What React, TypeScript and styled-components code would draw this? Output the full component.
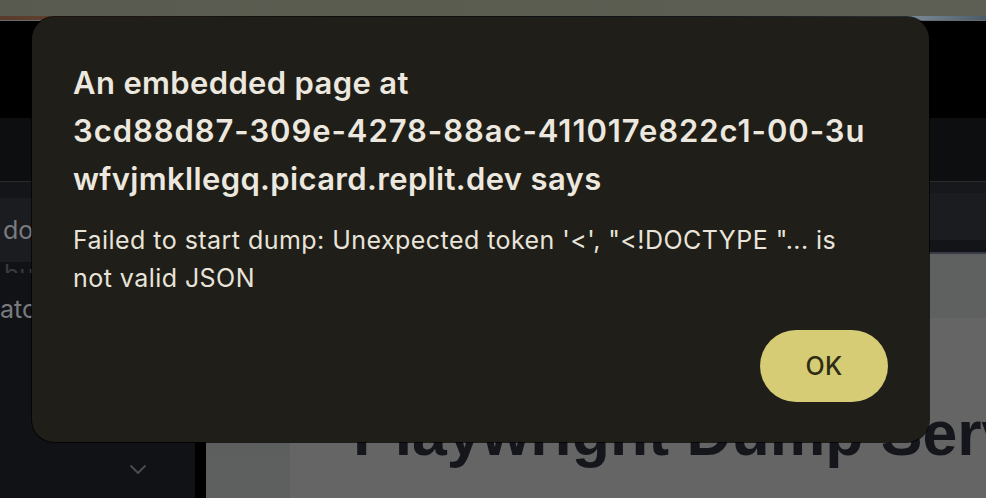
import React from "react";
import styled, { createGlobalStyle } from "styled-components";

const Global = createGlobalStyle`
  html, body { margin: 0; padding: 0; background: #000; }
  body { font-family: Inter, "Noto Sans", sans-serif; }
  * { box-sizing: border-box; }
`;

const Screen = styled.div`
  position: relative;
  width: 986px;
  height: 498px;
  overflow: hidden;
  display: flex;
  flex-direction: column;
  background: #000;
`;

const DesktopStrip = styled.div`
  height: 16px;
  flex: none;
  background: linear-gradient(90deg, #585a4f 0%, #5b5d51 50%, #5d5f55 100%);
`;

const WallpaperLine = styled.div`
  height: 5px;
  flex: none;
  background: linear-gradient(90deg, #5a3a2a 0%, #6a4a36 15%, #2a2d2c 35%, #3a4a55 70%, #8a9aa8 90%, #4a5a66 100%);
  border-bottom: 1px solid #6a6b6e;
`;

const BlackBar = styled.div`
  height: 97px;
  flex: none;
  background: #000;
`;

const AppNav = styled.div`
  height: 64px;
  flex: none;
  background: #0d0e10;
  border-bottom: 1px solid #2a2b2e;
`;

const Body = styled.div`
  flex: 1;
  display: flex;
  min-height: 0;
`;

const Sidebar = styled.div`
  width: 195px;
  flex: none;
  display: flex;
  flex-direction: column;
  background: #111215;
`;

const SidebarTop = styled.div`
  height: 16px;
  flex: none;
  background: #141518;
`;

const SideItem = styled.div<{ $active?: boolean; $faded?: boolean; $h: number; $pad: number }>`
  height: ${(p) => p.$h}px;
  flex: none;
  padding-left: ${(p) => p.$pad}px;
  display: flex;
  align-items: ${(p) => (p.$faded ? "flex-start" : "center")};
  line-height: ${(p) => (p.$faded ? 1 : "normal")};
  overflow: hidden;
  white-space: nowrap;
  background: ${(p) => (p.$active ? "#1b1c1f" : "transparent")};
  color: ${(p) => (p.$faded ? "#3a3b40" : "#7a7b80")};
  font-family: Inter, sans-serif;
  font-size: 25px;
`;

const SideSpacer = styled.div`
  flex: 1;
`;

const ChevronRow = styled.div`
  height: 38px;
  flex: none;
  display: flex;
  justify-content: center;
  align-items: flex-start;
  padding-left: 80px;
  padding-top: 4px;
  color: #4b4c51;
`;

const Gutter = styled.div`
  width: 11px;
  flex: none;
  background: #000;
`;

const Main = styled.div`
  flex: 1;
  display: flex;
  flex-direction: column;
  min-width: 0;
`;

const ToolbarTop = styled.div`
  height: 11px;
  flex: none;
  background: #17181b;
`;

const Toolbar = styled.div`
  height: 47px;
  flex: none;
  background: #1b1c1f;
`;

const ToolbarBottom = styled.div`
  height: 14px;
  flex: none;
  background: #131417;
  border-bottom: 2px solid #383a45;
`;

const Content = styled.div`
  flex: 1;
  display: flex;
  min-height: 0;
`;

const ContentSide = styled.div`
  width: 84px;
  flex: none;
  background: linear-gradient(180deg, #5a5b5b, #5e5f5f);
`;

const ContentMain = styled.div`
  flex: 1;
  display: flex;
  flex-direction: column;
  background: #656565;
  min-width: 0;
  overflow: hidden;
`;

const ContentHeader = styled.div`
  height: 64px;
  flex: none;
  background: #5f6060;
`;

const Heading = styled.h1`
  margin: 85px 0 0 0;
  padding: 0 0 0 63px;
  white-space: nowrap;
  font-family: "Liberation Sans", Arial, sans-serif;
  font-weight: 700;
  font-size: 62.5px;
  line-height: 60px;
  color: #15161b;
`;

const Dialog = styled.div`
  position: absolute;
  left: 32px;
  top: 17px;
  width: 897px;
  height: 425px;
  padding: 42px 41px 40px 41px;
  border-radius: 22px;
  background: #1f1e18;
  box-shadow: 0 0 0 1px rgba(0, 0, 0, 0.7);
  display: flex;
  flex-direction: column;
`;

const Title = styled.div`
  font-family: Inter, "Noto Sans", sans-serif;
  font-weight: 600;
  font-size: 31px;
  letter-spacing: 0.35px;
  line-height: 48px;
  color: #ece8df;
  white-space: nowrap;
`;

const HostPart = styled.span`
  letter-spacing: 0.93px;
`;

const Message = styled.div`
  margin-top: 18px;
  font-family: Inter, "Noto Sans", sans-serif;
  font-weight: 400;
  font-size: 25px;
  letter-spacing: 0.45px;
  line-height: 38px;
  color: #e8e4da;
  white-space: nowrap;
`;

const Actions = styled.div`
  margin-top: auto;
  display: flex;
  justify-content: flex-end;
`;

const OkButton = styled.button`
  width: 128px;
  height: 72px;
  border: none;
  border-radius: 36px;
  background: #d5cc75;
  color: #2e2c12;
  font-family: Inter, "Noto Sans", sans-serif;
  font-weight: 500;
  font-size: 25px;
  letter-spacing: 0.4px;
  cursor: pointer;
`;

export default function App() {
  return (
    <>
      <Global />
      <Screen>
        <DesktopStrip />
        <WallpaperLine />
        <BlackBar />
        <AppNav />
        <Body>
          <Sidebar>
            <SidebarTop />
            <SideItem $active $h={64} $pad={3}>downloads</SideItem>
            <SideItem $faded $h={11} $pad={4}>builds</SideItem>
            <SideItem $h={72} $pad={0}>atches</SideItem>
            <SideSpacer />
            <ChevronRow>
              <svg width="18" height="12" viewBox="0 0 18 12" fill="none">
                <path d="M2 2l7 7 7-7" stroke="currentColor" strokeWidth="1.8" strokeLinecap="round" strokeLinejoin="round" />
              </svg>
            </ChevronRow>
          </Sidebar>
          <Gutter />
          <Main>
            <ToolbarTop />
            <Toolbar />
            <ToolbarBottom />
            <Content>
              <ContentSide />
              <ContentMain>
                <ContentHeader />
                <Heading>Playwright Dump Server</Heading>
              </ContentMain>
            </Content>
          </Main>
        </Body>
        <Dialog role="alertdialog">
          <Title>
            An embedded page at
            <br />
            <HostPart>3cd88d87-309e-4278-88ac-411017e822c1-00-3u</HostPart>
            <br />
            wfvjmkllegq.picard.replit.dev says
          </Title>
          <Message>
            Failed to start dump: Unexpected token '&lt;', "&lt;!DOCTYPE "... is
            <br />
            not valid JSON
          </Message>
          <Actions>
            <OkButton>OK</OkButton>
          </Actions>
        </Dialog>
      </Screen>
    </>
  );
}
